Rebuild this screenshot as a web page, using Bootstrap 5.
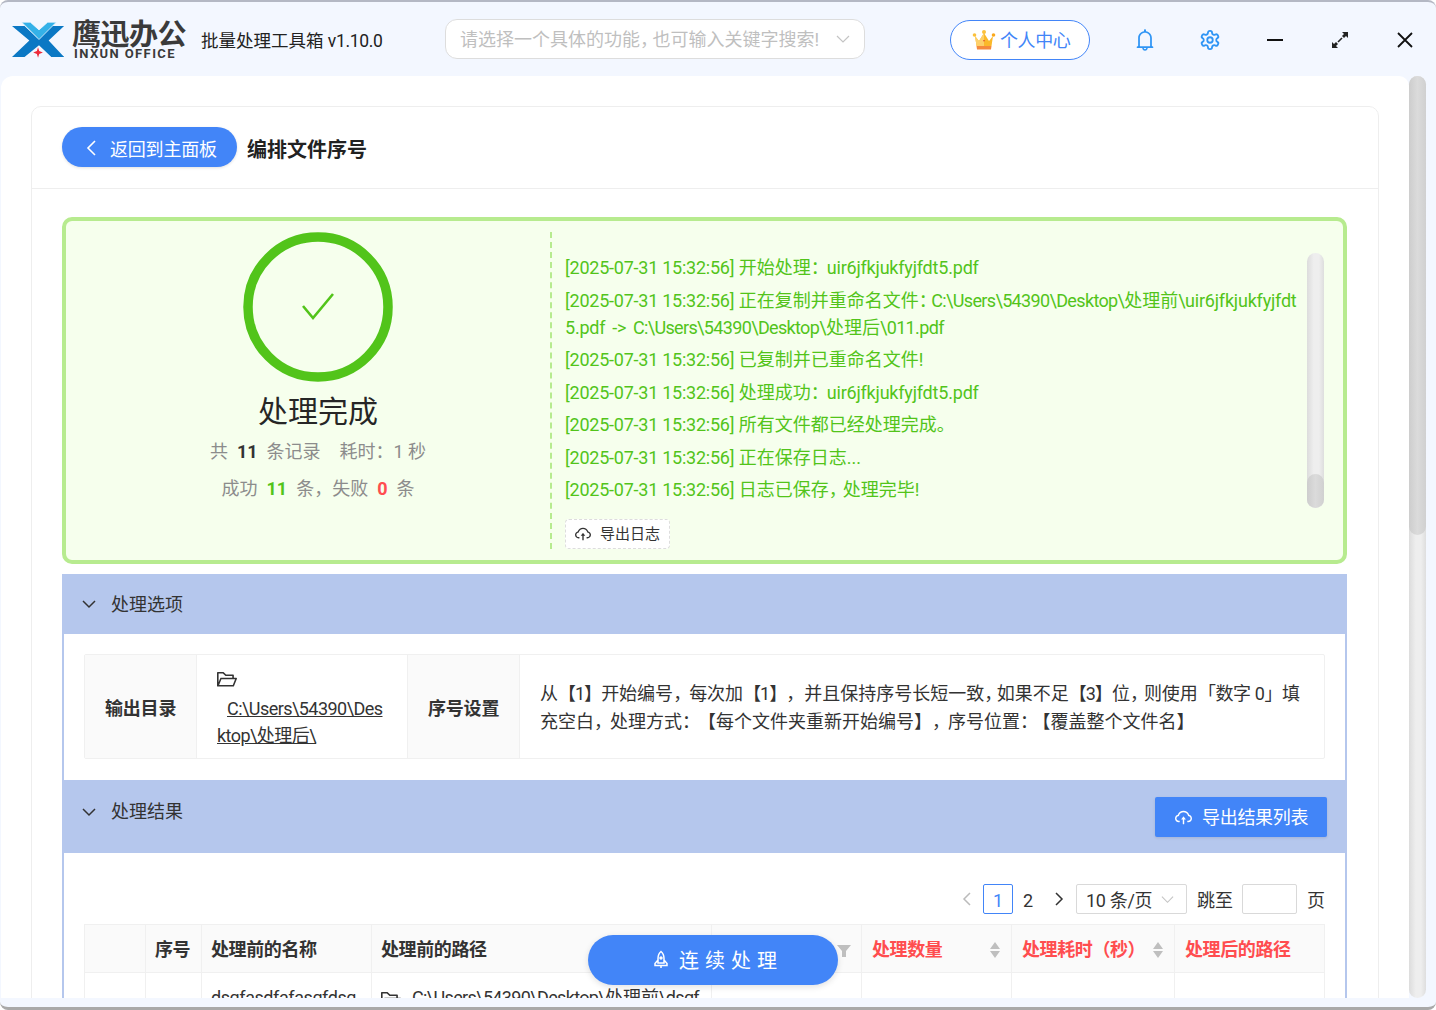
<!DOCTYPE html>
<html lang="zh-CN">
<head>
<meta charset="utf-8">
<title>批量处理工具箱</title>
<link rel="stylesheet" href="https://cdn.jsdelivr.net/npm/bootstrap@5.3.0/dist/css/bootstrap.min.css">
<style>
html,body{height:1010px;overflow:hidden;background:#fff;}
body{font-family:Roboto,"Noto Sans CJK SC",sans-serif;font-size:18px;color:#333;line-height:1.5;text-spacing-trim:space-all;}
.app-win{height:1010px;background:#f3f7ff;border-top:2px solid #b4b8c4;border-bottom:3px solid #a9a9a9;border-radius:8px;overflow:hidden;position:relative;}
.app-head{height:74px;padding-top:2px;flex:none;}
.app-head>*{flex:none;}
.logo-box{margin-left:12px;width:176px;}
.logo-svg{width:54px;height:38px;margin-right:6px;flex:none;}
.logo-cn{font-size:29px;line-height:27px;padding-top:2px;font-weight:700;color:#3a3a3a;letter-spacing:-.5px;white-space:nowrap;}
.logo-en{font-size:13px;line-height:13px;margin:-2px 0 0 2px;font-weight:700;color:#3a3a3a;letter-spacing:1.4px;white-space:nowrap;}
.app-name{margin-left:13px;color:#222;white-space:nowrap;width:244px;font-size:17.5px;padding-top:2px;}
.app-name span{letter-spacing:-.35px;}
.search-box{width:420px;height:40px;margin-top:-2px;background:#fff;border:1px solid #ddd;border-radius:12px;padding:0 14px;color:#bfbfbf;}
.me-btn{width:140px;height:40px;margin-left:85px;padding-left:21px;background:#fff;border:1px solid #4285f8;border-radius:20px;color:#4285f8;}
.me-btn svg{margin-right:4px;}
.me-btn span{padding-top:1px;letter-spacing:-.4px;}
.tool-box{margin-left:22px;}
.tool-ico{width:65px;flex:none;}
.main-wrap{height:922px;}
.main-pane{width:1408px;margin-left:1px;background:#fff;border-radius:12px 10px 0 0;overflow:hidden;padding:30px 30px 0;}
.bar-track{width:17px;background:linear-gradient(90deg,#dcdcdc,#eeeeee 40%,#eeeeee 70%,#dedede);border-radius:9px;}
.bar-thumb{width:17px;background:linear-gradient(90deg,#cdcdcd,#dbdbdb 50%,#d0d0d0);border-radius:9px;}
.page-track{height:922px;}
.page-thumb{height:459px;}
.log-track{height:255px;margin-left:10px;flex:none;}
.log-thumb{height:34px;}
.work-card{border-color:#eee;border-radius:10px 10px 0 0;height:900px;}
.work-head{height:82px;flex:none;padding:20px 30px;border-bottom:1px solid #eee;}
.back-btn{width:175px;height:40px;border-radius:20px;background:#4285f8;color:#fff;border:0;padding:0 0 0 23px;box-shadow:0 1px 3px rgba(0,0,0,.12);}
.back-btn svg{margin-top:2px;}
.back-btn span{margin-left:12px;padding-top:4px;letter-spacing:-.2px;}
.work-title{font-size:20px;font-weight:700;margin-left:10px;color:#222;padding-top:8px;}
.work-body{padding:28px 31px 0 30px;}
.ok-panel{height:347px;background:#f6ffed;border:4px solid #b7eb8f;border-radius:10px;padding:11px 0;}
.ok-left{width:484px;padding-left:20px;flex:none;}
.ok-ring{width:150px;height:150px;flex:none;}
.ok-title{font-size:30px;line-height:42px;margin-top:9px;color:#262626;}
.ok-line{color:#8c8c8c;line-height:37px;white-space:nowrap;}
.ok-line b{font-weight:700;color:#333;margin:0 9px;}
.ok-line b.is-ok{color:#52c41a;}
.ok-line b.is-bad{color:#ff4d4f;}
.ok-gap{margin-left:19px;}
.ok-right{flex:1;border-left:2px dashed #b7eb8f;padding:21px 22px 0 13px;min-width:0;}
.log-text{width:732px;flex:none;height:255px;padding-top:1px;overflow:hidden;color:#52c41a;white-space:nowrap;}
.log-text p{margin:0 0 5.5px;line-height:27px;}
.lt{letter-spacing:-.24px;}
.lp{letter-spacing:-.65px;}
.lf{letter-spacing:-.2px;}
.lw{word-spacing:2.5px;}
.pc{letter-spacing:-4px;}
.pd{letter-spacing:-5.5px;}
.pe{letter-spacing:-2px;}
.bk{letter-spacing:-1px;}
.bj{letter-spacing:-.4px;}
.log-btn{width:105px;height:30px;margin-top:11px;padding-left:9px;background:#fff;border:1px dashed #ddd;border-radius:4px;font-size:15px;color:#333;gap:9px;}
.sec-bar{background:#b5c7ed;padding-left:20px;}
.sec-one{height:60px;margin-top:10px;}
.sec-two{height:73px;padding:17px 20px 0 20px;}
.sec-two>svg{margin-top:8px;flex:none;}
.sec-bar .sec-name{margin-left:15px;line-height:27px;}
.sec-two .sec-name{margin-top:1px;}
.sec-body{border:solid #b5c7ed;border-width:0 2px;padding:20px 20px 21px;background:#fff;}
.opt-tbl{border:1px solid #f0f0f0;border-radius:2px;height:105px;}
.opt-key{background:#fafafa;font-weight:700;width:112px;flex:none;padding:4px 20px 0;color:#333;border-right:1px solid #f0f0f0;white-space:nowrap;letter-spacing:-.2px;}
.opt-path{width:211px;flex:none;padding:11px 0 0 20px;line-height:27px;white-space:nowrap;border-right:1px solid #f0f0f0;color:#333;}
.opt-path svg{display:block;margin:4px 0 7px;}
.opt-path u{letter-spacing:-.55px;}
.opt-path u.first-bit{margin-left:10px;}
.opt-desc{padding:2px 20px 0;line-height:28px;color:#333;white-space:nowrap;}
.exp-btn{width:172px;height:40px;padding-left:20px;background:#4285f8;color:#fff;border:0;border-radius:2px;gap:10px;box-shadow:0 1px 3px rgba(0,0,0,.1);}
.exp-btn span{letter-spacing:-.3px;}
.pager-row{margin-top:11px;height:30px;color:#333;}
.pager-row>span,.pager-row>div>span{padding-top:2px;}
.pg-cur{width:30px;height:30px;margin-left:7px;border:1px solid #4285f8;border-radius:2px;color:#4285f8;padding-top:2px;}
.pg-two{width:30px;margin-right:8px;padding-top:2px;}
.pg-ar{width:15px;flex:none;margin-right:1px;}
.pg-sel{width:111px;height:30px;border:1px solid #d9d9d9;border-radius:2px;padding:0 12px 0 9px;margin-left:9px;letter-spacing:-.3px;}
.pg-jump{margin-left:10px;}
.pg-in{width:55px;height:30px;border:1px solid #d9d9d9;border-radius:2px;margin:0 10px 0 9px;background:#fff;}
.res-tbl{table-layout:fixed;width:1241px;margin:10px 0 0;border-collapse:separate;border-spacing:0;}
.res-tbl th,.res-tbl td{border-right:1px solid #f0f0f0;border-bottom:1px solid #f0f0f0;padding:0 10px;white-space:nowrap;overflow:hidden;}
.res-tbl th{background:#fafafa;height:49px;font-weight:700;border-top:1px solid #f0f0f0;color:#333;padding-top:2px;letter-spacing:-.4px;}
.res-tbl th:first-child,.res-tbl td:first-child{border-left:1px solid #f0f0f0;}
.res-tbl th:nth-child(2){padding-left:9px;}
.res-tbl th:nth-child(3),.res-tbl td:nth-child(3),.res-tbl th:nth-child(4),.res-tbl td:nth-child(4){padding-left:9px;}
.res-tbl td{height:50px;color:#333;}
.res-tbl td svg{margin-right:11px;}
.res-tbl .hot-col{color:#ff4d4f;}
.tbl-txt{letter-spacing:-.42px;}
.run-btn{position:absolute;left:588px;top:933px;width:250px;height:50px;padding-left:16px;border:0;border-radius:25px;background:#4285f8;color:#fff;font-size:20px;letter-spacing:6px;box-shadow:0 2px 6px rgba(0,0,0,.12);gap:10px;z-index:5;}
.run-btn span{padding-top:2px;}
</style>
</head>
<body>
<div class="app-win d-flex flex-column">
  <header class="app-head d-flex align-items-center">
    <div class="logo-box d-flex align-items-center">
      <svg class="logo-svg" viewBox="4 5 56 39" aria-hidden="true">
        <path d="M4 10H17L32 24 58 42H45L32 30 17 42H4L22 25 Z" fill="#0b78c4"/>
        <path d="M45 10H58L42 25 58 42H45L28 25Z" fill="#0b78c4"/>
        <path d="M14 6H23L32 14 41 6H50L32 24Z" fill="#34b1e8" stroke="#f3f7ff" stroke-width=".8"/>
        <path d="M31 32L32.2 36 36 37.5 32.2 39 31 43 29.8 39 26 37.5 29.8 36Z" fill="#ee2b3b"/>
      </svg>
      <div>
        <div class="logo-cn">鹰迅办公</div>
        <div class="logo-en">INXUN OFFICE</div>
      </div>
    </div>
    <div class="app-name">批量处理工具箱 <span>v1.10.0</span></div>
    <div class="search-box d-flex align-items-center justify-content-between">
      <span>请选择一个具体的功能<span class="pd">&#65292;</span>也可输入关键字搜索&#33;</span>
      <svg width="14" height="14" viewBox="0 0 14 14" fill="none" stroke="#c4c4c4" stroke-width="1.2"><path d="M1 4l6 6 6-6"/></svg>
    </div>
    <div class="me-btn d-flex align-items-center">
      <svg width="24" height="22" viewBox="0 0 24 22" aria-hidden="true">
        <path d="M3 7L7 12 12 4 17 12 21 7 19.5 17H4.5Z" fill="#fbb92a"/>
        <path d="M3 7L7 12 12 4V17H4.5Z" fill="#fdd06a"/>
        <circle cx="2.5" cy="6" r="1.8" fill="#fbc13c"/><circle cx="12" cy="3" r="2" fill="#fbc13c"/><circle cx="21.5" cy="6" r="1.8" fill="#fba91c"/>
        <path d="M4.500 17H19.500L19 20.500H5Z" fill="#f58a3c"/>
        <path d="M11 11h2l-1 2z" fill="#e2552b"/>
      </svg>
      <span>个人中心</span>
    </div>
    <div class="tool-box d-flex align-items-center">
      <div class="tool-ico d-flex justify-content-center">
        <svg width="22" height="24" viewBox="64 64 896 896" fill="#2f95f5"><path d="M816 768h-24V428c0-141.100-104.300-257.700-240-277.100V112c0-22.100-17.900-40-40-40s-40 17.900-40 40v38.900c-135.700 19.400-240 136-240 277.100v340h-24c-17.700 0-32 14.300-32 32v32c0 4.400 3.600 8 8 8h216c0 61.800 50.200 112 112 112s112-50.200 112-112h216c4.400 0 8-3.600 8-8v-32c0-17.700-14.300-32-32-32zM512 888c-26.500 0-48-21.500-48-48h96c0 26.500-21.500 48-48 48zM304 768V428c0-55.600 21.600-107.800 60.900-147.100S456.400 220 512 220c55.600 0 107.800 21.600 147.100 60.900S720 372.400 720 428v340H304z"/></svg>
      </div>
      <div class="tool-ico d-flex justify-content-center">
        <svg width="22" height="22" viewBox="0 0 24 24" fill="none" stroke="#2f95f5" stroke-width="2"><path d="M12.220 2h-.44a2 2 0 0 0-2 2v.18a2 2 0 0 1-1 1.730l-.43.25a2 2 0 0 1-2 0l-.15-.08a2 2 0 0 0-2.730.73l-.22.38a2 2 0 0 0 .73 2.730l.15.1a2 2 0 0 1 1 1.720v.51a2 2 0 0 1-1 1.740l-.15.09a2 2 0 0 0-.73 2.730l.22.38a2 2 0 0 0 2.730.73l.15-.08a2 2 0 0 1 2 0l.43.25a2 2 0 0 1 1 1.730V20a2 2 0 0 0 2 2h.44a2 2 0 0 0 2-2v-.18a2 2 0 0 1 1-1.730l.43-.25a2 2 0 0 1 2 0l.15.08a2 2 0 0 0 2.730-.73l.22-.39a2 2 0 0 0-.73-2.730l-.15-.08a2 2 0 0 1-1-1.740v-.5a2 2 0 0 1 1-1.740l.15-.09a2 2 0 0 0 .73-2.730l-.22-.38a2 2 0 0 0-2.730-.73l-.15.08a2 2 0 0 1-2 0l-.43-.25a2 2 0 0 1-1-1.730V4a2 2 0 0 0-2-2z"/><circle cx="12" cy="12" r="3"/></svg>
      </div>
      <div class="tool-ico d-flex justify-content-center">
        <svg width="18" height="18" viewBox="0 0 18 18"><path d="M1 9H17" stroke="#111" stroke-width="2"/></svg>
      </div>
      <div class="tool-ico d-flex justify-content-center">
        <svg width="18" height="18" viewBox="0 0 18 18" fill="#222"><path d="M7 11L11 7" stroke="#222" stroke-width="1.600"/><path d="M11 1H17V7L15 5 13 7 11 5 13 3ZM7 17H1V11L3 13 5 11 7 13 5 15Z"/></svg>
      </div>
      <div class="tool-ico d-flex justify-content-center">
        <svg width="18" height="18" viewBox="0 0 18 18" fill="none" stroke="#111" stroke-width="1.800"><path d="M2 2L16 16M16 2L2 16"/></svg>
      </div>
    </div>
  </header>

  <div class="main-wrap d-flex">
    <main class="main-pane">
      <section class="card work-card">
        <div class="work-head d-flex align-items-start">
          <button type="button" class="back-btn d-flex align-items-center">
            <svg width="13" height="18" viewBox="0 0 13 18" fill="none" stroke="#fff" stroke-width="1.600"><path d="M10 2L3 9 10 16"/></svg>
            <span>返回到主面板</span>
          </button>
          <div class="work-title">编排文件序号</div>
        </div>
        <div class="work-body">
          <div class="ok-panel d-flex">
            <div class="ok-left d-flex flex-column align-items-center">
              <svg class="ok-ring" viewBox="0 0 150 150" fill="none"><circle cx="75" cy="75" r="70" stroke="#52c41a" stroke-width="9.500"/><path d="M60 74L70 86 90 62" stroke="#52c41a" stroke-width="2.600"/></svg>
              <div class="ok-title">处理完成</div>
              <div class="ok-line">共<b>11</b>条记录<span class="ok-gap">耗时</span>&#65306;1 秒</div>
              <div class="ok-line">成功<b class="is-ok">11</b>条&#65292;失败<b class="is-bad">0</b>条</div>
            </div>
            <div class="ok-right">
              <div class="d-flex">
                <div class="log-text">
                  <p><span class="lt">[2025-07-31 15:32:56]</span> 开始处理<span class="pe">&#65306;</span><span class="lf">uir6jfkjukfyjfdt5.pdf</span></p>
                  <p><span class="lt">[2025-07-31 15:32:56]</span> 正在复制并重命名文件<span class="pd">&#65306;</span><span class="lp">C:\Users\54390\Desktop\</span>处理前<span class="lp">\</span><span class="lf">uir6jfkjukfyjfdt</span><br><span class="lf lw">5.pdf -&gt; </span><span class="lp">C:\Users\54390\Desktop\</span>处理后<span class="lp">\011.pdf</span></p>
                  <p><span class="lt">[2025-07-31 15:32:56]</span> 已复制并已重命名文件&#33;</p>
                  <p><span class="lt">[2025-07-31 15:32:56]</span> 处理成功<span class="pe">&#65306;</span><span class="lf">uir6jfkjukfyjfdt5.pdf</span></p>
                  <p><span class="lt">[2025-07-31 15:32:56]</span> 所有文件都已经处理完成。</p>
                  <p><span class="lt">[2025-07-31 15:32:56]</span> 正在保存日志...</p>
                  <p><span class="lt">[2025-07-31 15:32:56]</span> 日志已保存<span class="pc">&#65292;</span>处理完毕&#33;</p>
                </div>
                <div class="bar-track log-track d-flex flex-column justify-content-end"><div class="bar-thumb log-thumb"></div></div>
              </div>
              <div class="log-btn d-flex align-items-center">
                <svg width="16" height="16" viewBox="64 64 896 896" fill="#333"><path d="M518.300 459a8 8 0 0 0-12.600 0l-112 141.700a7.980 7.980 0 0 0 6.300 12.900h73.900V856c0 4.400 3.600 8 8 8h60c4.400 0 8-3.600 8-8V613.700H624c6.700 0 10.400-7.700 6.300-12.900L518.300 459z"/><path d="M811.400 366.700C765.600 245.900 648.900 160 512.200 160S258.800 245.800 213 366.600C127.300 389.100 64 467.200 64 560c0 110.500 89.500 200 199.900 200H304c4.400 0 8-3.600 8-8v-60c0-4.400-3.600-8-8-8h-40.100c-33.700 0-65.400-13.400-89-37.700-23.500-24.200-36-56.800-34.900-90.600.9-26.400 9.900-51.200 26.200-72.100 16.700-21.300 40.100-36.800 66.100-43.700l37.900-9.900 13.900-36.600c8.600-22.800 20.600-44.100 35.700-63.400a245.600 245.600 0 0 1 52.400-49.900c41.100-28.900 89.500-44.200 140-44.200s98.900 15.300 140 44.200c19.900 14 37.500 30.800 52.400 49.900 15.100 19.300 27.100 40.700 35.700 63.400l13.800 36.500 37.800 10C846.100 454.500 884 503.800 884 560c0 33.100-12.900 64.300-36.300 87.700a123.070 123.070 0 0 1-87.600 36.300H720c-4.400 0-8 3.600-8 8v60c0 4.400 3.600 8 8 8h40.100C870.500 760 960 670.500 960 560c0-92.700-63.100-170.700-148.600-193.300z"/></svg>
                <span>导出日志</span>
              </div>
            </div>
          </div>

          <div class="sec-bar sec-one d-flex align-items-center">
            <svg width="14" height="14" viewBox="0 0 14 14" fill="none" stroke="#333" stroke-width="1.500"><path d="M1 4l6 6 6-6"/></svg>
            <span class="sec-name">处理选项</span>
          </div>
          <div class="sec-body">
            <div class="opt-tbl d-flex">
              <div class="opt-key d-flex align-items-center">输出目录</div>
              <div class="opt-path">
                <svg width="20" height="18" viewBox="64 150 896 700" fill="#333"><path d="M928 444H820V330.400c0-17.700-14.300-32-32-32H473L355.700 186.200a8.150 8.150 0 0 0-5.500-2.200H96c-17.700 0-32 14.300-32 32v592c0 17.700 14.300 32 32 32h698c13 0 24.800-7.900 29.700-20l134-332c1.500-3.800 2.300-7.900 2.300-12 0-17.700-14.300-32-32-32zM136 256h188.500l119.600 114.400H748V444H238c-13 0-24.800 7.900-29.700 20L136 643.200V256zm635.300 512H159l103.300-256h612.400L771.300 768z"/></svg>
                <u class="first-bit">C:\Users\54390\Des</u><br><u>ktop\处理后\</u>
              </div>
              <div class="opt-key d-flex align-items-center">序号设置</div>
              <div class="opt-desc d-flex align-items-center flex-fill"><div>从<span class="bk">【1】</span>开始编号<span class="pe">&#65292;</span>每次加<span class="bk">【1】</span>&#65292;并且保持序号长短一致<span class="pd">&#65292;</span>如果不足<span class="bk">【3】</span>位<span class="pc">&#65292;</span>则使用<span class="bj">「数字 0」</span>填<br>充空白<span class="pe">&#65292;</span>处理方式<span class="pe">&#65306;</span>【每个文件夹重新开始编号】<span class="pe">&#65292;</span>序号位置<span class="pd">&#65306;</span>【覆盖整个文件名】</div></div>
            </div>
          </div>

          <div class="sec-bar sec-two d-flex align-items-start">
            <svg width="14" height="14" viewBox="0 0 14 14" fill="none" stroke="#333" stroke-width="1.500"><path d="M1 4l6 6 6-6"/></svg>
            <span class="sec-name">处理结果</span>
            <button type="button" class="exp-btn d-flex align-items-center ms-auto">
              <svg width="17" height="17" viewBox="64 64 896 896" fill="#fff"><path d="M518.300 459a8 8 0 0 0-12.600 0l-112 141.700a7.980 7.980 0 0 0 6.300 12.900h73.900V856c0 4.400 3.600 8 8 8h60c4.400 0 8-3.600 8-8V613.700H624c6.700 0 10.400-7.700 6.300-12.900L518.300 459z"/><path d="M811.400 366.700C765.600 245.900 648.900 160 512.200 160S258.800 245.800 213 366.600C127.300 389.100 64 467.200 64 560c0 110.500 89.500 200 199.900 200H304c4.400 0 8-3.600 8-8v-60c0-4.400-3.600-8-8-8h-40.100c-33.700 0-65.400-13.400-89-37.700-23.500-24.200-36-56.800-34.900-90.600.9-26.400 9.900-51.200 26.200-72.100 16.700-21.300 40.100-36.800 66.100-43.700l37.900-9.900 13.900-36.600c8.600-22.800 20.600-44.100 35.700-63.400a245.600 245.600 0 0 1 52.400-49.900c41.100-28.900 89.500-44.200 140-44.200s98.900 15.300 140 44.200c19.900 14 37.500 30.800 52.400 49.900 15.100 19.300 27.100 40.700 35.700 63.400l13.800 36.500 37.800 10C846.100 454.500 884 503.800 884 560c0 33.100-12.900 64.300-36.300 87.700a123.070 123.070 0 0 1-87.600 36.300H720c-4.400 0-8 3.600-8 8v60c0 4.400 3.600 8 8 8h40.100C870.500 760 960 670.500 960 560c0-92.700-63.100-170.700-148.600-193.300z"/></svg>
              <span>导出结果列表</span>
            </button>
          </div>
          <div class="sec-body">
            <div class="pager-row d-flex align-items-center justify-content-end">
              <svg class="pg-ar" width="15" height="14" viewBox="0 0 15 14" fill="none" stroke="#bbb" stroke-width="1.500"><path d="M10 1L4 7l6 6"/></svg>
              <div class="pg-cur d-flex align-items-center justify-content-center">1</div>
              <div class="pg-two text-center">2</div>
              <svg class="pg-ar" width="15" height="14" viewBox="0 0 15 14" fill="none" stroke="#333" stroke-width="1.500"><path d="M5 1l6 6-6 6"/></svg>
              <div class="pg-sel d-flex align-items-center justify-content-between">
                <span>10 条/页</span>
                <svg width="13" height="13" viewBox="0 0 14 14" fill="none" stroke="#c4c4c4" stroke-width="1.200"><path d="M1 4l6 6 6-6"/></svg>
              </div>
              <span class="pg-jump">跳至</span>
              <div class="pg-in"></div>
              <span>页</span>
            </div>
            <table class="res-tbl">
              <colgroup><col style="width:62px"><col style="width:56px"><col style="width:170px"><col style="width:340px"><col style="width:150px"><col style="width:150px"><col style="width:163px"><col style="width:150px"></colgroup>
              <thead>
                <tr>
                  <th></th><th>序号</th><th>处理前的名称</th><th>处理前的路径</th>
                  <th class="text-end"><svg width="14" height="14" viewBox="0 0 14 14" fill="#bfbfbf"><path d="M0 1H14L9 7V13H5V7Z"/></svg></th>
                  <th class="hot-col"><div class="d-flex justify-content-between align-items-center">处理数量<svg width="12" height="18" viewBox="0 0 12 18" fill="#bfbfbf"><path d="M6 1L11 8H1ZM6 17L1 10H11Z"/></svg></div></th>
                  <th class="hot-col"><div class="d-flex justify-content-between align-items-center">处理耗时&#65288;秒&#65289;<svg width="12" height="18" viewBox="0 0 12 18" fill="#bfbfbf"><path d="M6 1L11 8H1ZM6 17L1 10H11Z"/></svg></div></th>
                  <th class="hot-col">处理后的路径</th>
                </tr>
              </thead>
              <tbody>
                <tr>
                  <td></td><td></td><td class="tbl-txt">dsgfasdfafasgfdsg</td>
                  <td><svg width="20" height="18" viewBox="64 150 896 700" fill="#333"><path d="M928 444H820V330.400c0-17.700-14.300-32-32-32H473L355.700 186.200a8.150 8.150 0 0 0-5.500-2.200H96c-17.700 0-32 14.300-32 32v592c0 17.700 14.300 32 32 32h698c13 0 24.800-7.900 29.700-20l134-332c1.500-3.800 2.300-7.900 2.300-12 0-17.700-14.300-32-32-32zM136 256h188.500l119.600 114.400H748V444H238c-13 0-24.800 7.900-29.700 20L136 643.200V256zm635.300 512H159l103.300-256h612.400L771.300 768z"/></svg><span class="lp">C:\Users\54390\Desktop\</span>处理前<span class="lp">\dsgf</span></td>
                  <td></td><td></td><td></td><td></td>
                </tr>
              </tbody>
            </table>
          </div>
        </div>
      </section>
    </main>
    <div class="bar-track page-track"><div class="bar-thumb page-thumb"></div></div>
  </div>

  <button type="button" class="run-btn d-flex align-items-center justify-content-center">
    <svg width="16" height="20" viewBox="0 0 16 20" fill="none" stroke="#fff" stroke-width="1.500" aria-hidden="true"><path d="M8 1.500C10.500 3.500 11 6 11 8.500V13H5V8.500C5 6 5.500 3.500 8 1.500ZM5 10L2 13.500V15.500H14V13.500L11 10M8 15.500V18"/><circle cx="8" cy="8" r="1" fill="#fff"/></svg>
    <span>连续处理</span>
  </button>
</div>
<script src="https://cdn.jsdelivr.net/npm/bootstrap@5.3.0/dist/js/bootstrap.bundle.min.js"></script>
</body>
</html>
